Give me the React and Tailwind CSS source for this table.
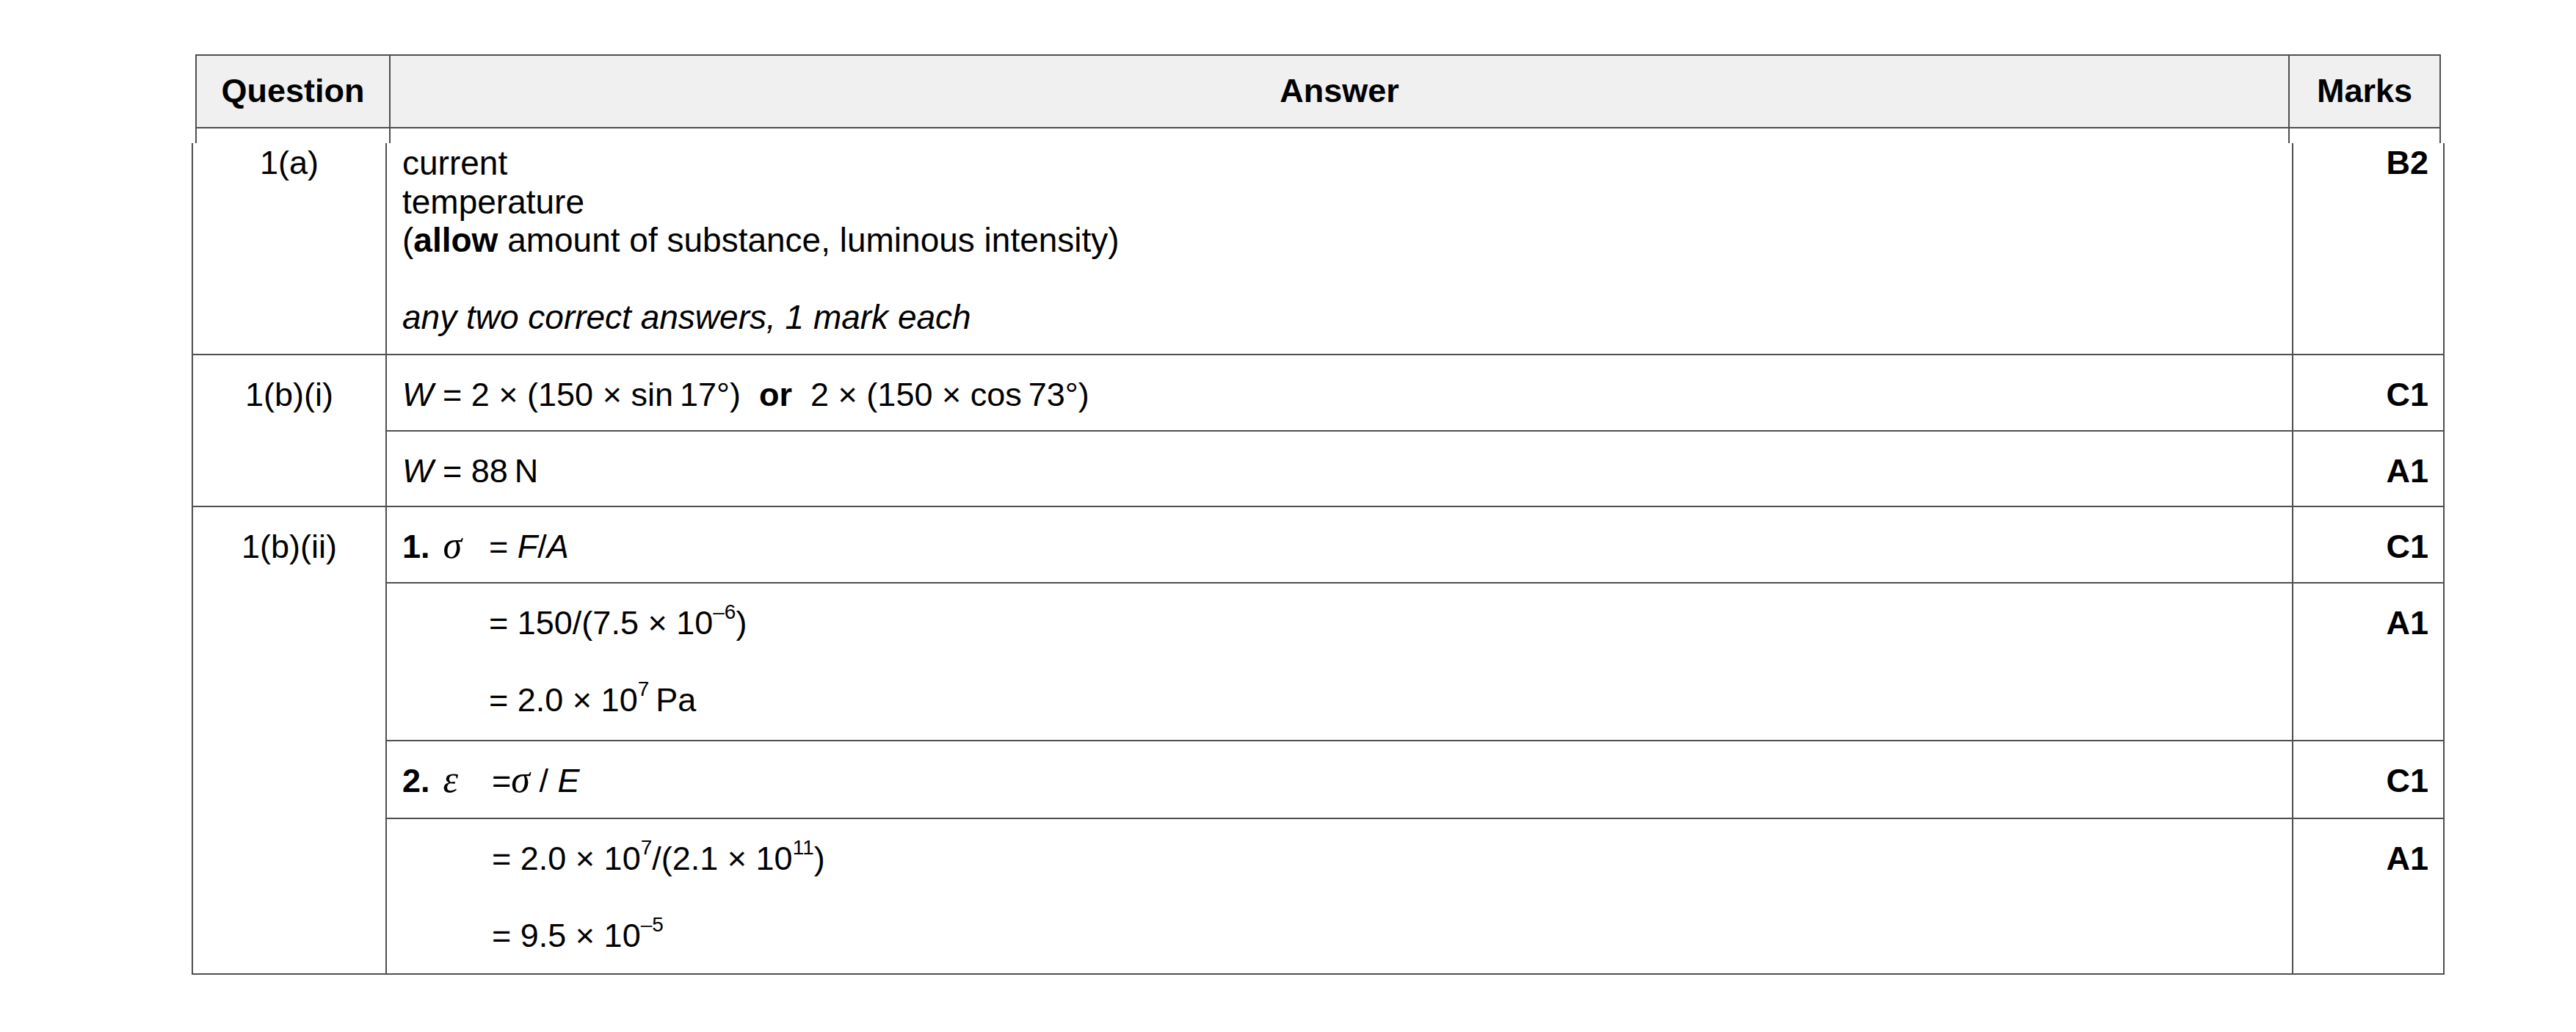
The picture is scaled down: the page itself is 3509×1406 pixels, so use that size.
const line = "border-[#4f4f4f]";

function Sup({ children }) {
  return <sup className="text-[28px] -top-[21px]">{children}</sup>;
}

function Serif({ children }) {
  return <span className="font-['Liberation_Serif',serif] text-[52px] leading-[0] italic">{children}</span>;
}

function Row({ className = "", pad = "pt-[28px]", mark, children }) {
  return (
    <div className={`flex ${className}`}>
      <div className={`w-[2597px] border-r-2 ${line} pl-[21px] ${pad}`}>{children}</div>
      <div className={`flex-1 pr-[20px] text-right font-bold ${pad}`}>{mark}</div>
    </div>
  );
}

function Group({ label, className = "", labelPad = "pt-[28px]", children }) {
  return (
    <div className={`flex ${className}`}>
      <div className={`w-[264px] border-r-2 ${line} text-center ${labelPad}`}>{label}</div>
      <div className="flex flex-1 flex-col">{children}</div>
    </div>
  );
}

export default function App() {
  return (
    <div className="min-h-[1406px] w-[3509px] bg-white pt-[74px] font-['Liberation_Sans',Arial,sans-serif] text-[45px] leading-[52.5px] text-black">
      {/* header */}
      <div className="ml-[266px] w-[3059px]">
        <div className={`flex h-[101px] border-2 ${line} bg-[#f0f0f0] font-bold`}>
          <div className={`flex w-[264px] items-center justify-center border-r-2 ${line}`}>Question</div>
          <div className={`flex w-[2587px] items-center justify-center border-r-2 ${line}`}>Answer</div>
          <div className="flex flex-1 items-center justify-center">Marks</div>
        </div>
        <div className={`flex h-[20px] border-x-2 ${line}`}>
          <div className={`w-[264px] border-r-2 ${line}`} />
          <div className={`w-[2587px] border-r-2 ${line}`} />
          <div className="flex-1" />
        </div>
      </div>

      {/* body */}
      <div className={`ml-[261px] w-[3069px] border-x-2 border-b-2 ${line}`}>
        <Group label="1(a)" labelPad="pt-[1px]" className={`h-[289px] border-b-2 ${line}`}>
          <Row className="flex-1" pad="pt-[1px]" mark="B2">
            <div className="text-[46px]">
              <div>current</div>
              <div>temperature</div>
              <div>
                (<b>allow</b> amount of substance, luminous intensity)
              </div>
              <div className="h-[52.5px]" />
              <div className="italic">any two correct answers, 1 mark each</div>
            </div>
          </Row>
        </Group>

        <Group label="1(b)(i)" className={`h-[207px] border-b-2 ${line}`}>
          <Row className={`h-[104px] border-b-2 ${line}`} mark="C1">
            <i>W</i> = 2 × (150 × sin{"\u2009"}17°){"\u00a0\u00a0"}<b>or</b>{"\u00a0\u00a0"}2 × (150 × cos{"\u2009"}73°)
          </Row>
          <Row className="flex-1" mark="A1">
            <i>W</i> = 88{"\u2009"}N
          </Row>
        </Group>

        <Group label="1(b)(ii)" className="h-[635px]">
          <Row className={`h-[104px] border-b-2 ${line}`} mark="C1">
            <span className="inline-block w-[118px]">
              <b>1.</b>
              <span className="ml-[18px]">
                <Serif>σ</Serif>
              </span>
            </span>
            = <i>F</i>/<i>A</i>
          </Row>
          <Row className={`h-[215px] border-b-2 ${line}`} mark="A1">
            <div className="pl-[118px]">
              = 150/(7.5 × 10<Sup>–6</Sup>)
            </div>
            <div className="h-[52.5px]" />
            <div className="pl-[118px]">
              = 2.0 × 10<Sup>7</Sup>
              {"\u2009"}Pa
            </div>
          </Row>
          <Row className={`h-[106px] border-b-2 ${line}`} mark="C1">
            <span className="inline-block w-[122px]">
              <b>2.</b>
              <span className="ml-[18px]">
                <Serif>ε</Serif>
              </span>
            </span>
            =<Serif>σ</Serif> / <i>E</i>
          </Row>
          <Row className="flex-1" mark="A1">
            <div className="pl-[122px]">
              = 2.0 × 10<Sup>7</Sup>/(2.1 × 10<Sup>11</Sup>)
            </div>
            <div className="h-[52.5px]" />
            <div className="pl-[122px]">
              = 9.5 × 10<Sup>–5</Sup>
            </div>
          </Row>
        </Group>
      </div>
    </div>
  );
}
